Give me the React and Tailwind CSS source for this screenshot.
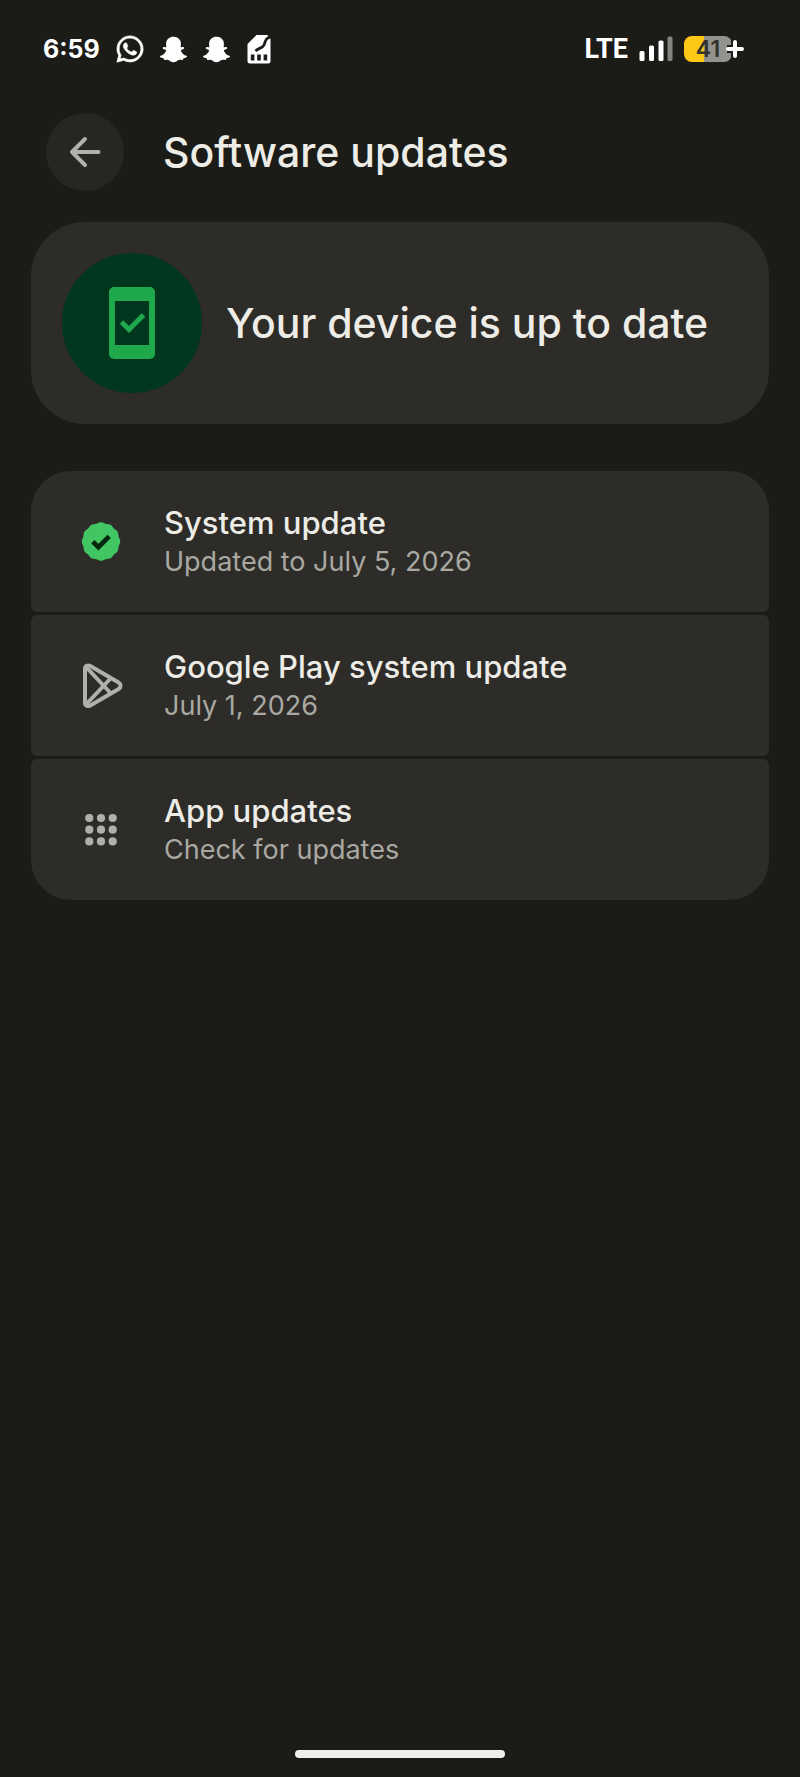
import React from 'react'
import { FaWhatsapp, FaSnapchatGhost } from 'react-icons/fa'

// twelve soft lobes around the badge
const badgePath =
  Array.from({ length: 144 }, (_, i) => {
    const a = (i / 144) * Math.PI * 2
    const r = 18.8 + 0.45 * Math.cos(12 * a)
    const x = 20 + r * Math.sin(a)
    const y = 19.5 - r * Math.cos(a)
    return `${i === 0 ? 'M' : 'L'}${x.toFixed(2)} ${y.toFixed(2)}`
  }).join('') + 'Z'

const VerifiedIcon = () => (
  <svg viewBox="0 0 40 40" className="w-10 h-10" aria-hidden="true">
    <path d={badgePath} fill="#42c563" />
    <path d="M11.8 19.6l5.6 5.6L28.2 14.4" fill="none" stroke="#06280f" strokeWidth="4.8" />
  </svg>
)

const PlayIcon = () => (
  <svg viewBox="0 0 40 44" className="w-10 h-11 overflow-visible" fill="none" stroke="#b1afa9" strokeWidth="4" strokeLinejoin="round" aria-hidden="true">
    <path d="M4 4.8v33.9c0 3 2.8 4.1 5.3 2.7L37.6 25c2.6-1.5 2.6-5 0-6.5L9.3 2.1C6.8.7 4 1.8 4 4.8z" />
    <path d="M5.5 3.5L30 29.5M5.5 40L30 14" />
  </svg>
)

const AppsIcon = () => (
  <svg viewBox="0 0 40 40" className="w-10 h-10" fill="#b1afa9" aria-hidden="true">
    {[8, 19.7, 31.4].map((y) =>
      [8.3, 20, 31.7].map((x) => <circle key={`${x}-${y}`} cx={x} cy={y} r="4.1" />)
    )}
  </svg>
)

const PhoneCheckIcon = () => (
  <svg viewBox="0 0 46 72" className="w-[46px] h-[72px]" aria-hidden="true">
    <path
      fillRule="evenodd"
      fill="#1fa84c"
      d="M5 0h36a5 5 0 0 1 5 5v62a5 5 0 0 1-5 5H5a5 5 0 0 1-5-5V5a5 5 0 0 1 5-5zM6 14v44h34V14z"
    />
    <path d="M12.5 35l7.5 7.5L34.5 28" fill="none" stroke="#1fa84c" strokeWidth="5" />
  </svg>
)

const SimIcon = () => (
  <svg viewBox="0 0 26 30" className="w-[26px] h-[30px]" aria-hidden="true">
    <path d="M10.5 1H22.5a2 2 0 0 1 2 2V27a2.5 2.5 0 0 1-2.5 2.5H4A2.5 2.5 0 0 1 1.5 27V10z" fill="#fff" />
    <path d="M26 3C19.5 3 19.5 7.5 18 11s-5 2.5-8.5 6" fill="none" stroke="#1b1c17" strokeWidth="2.8" />
    <path d="M20 0h6v5z" fill="#1b1c17" />
    <path d="M4.8 20.5h3.6v6H4.8zM11.2 20.5h3.6v6h-3.6zM17.6 20.5h3.6v6h-3.6z" fill="#1b1c17" />
  </svg>
)

const SignalIcon = () => (
  <svg viewBox="0 0 34 26" className="w-[34px] h-[26px]" fill="#fff" aria-hidden="true">
    <rect x="0.5" y="15" width="5" height="10" rx="1.5" />
    <rect x="10" y="9.5" width="5" height="15.5" rx="1.5" />
    <rect x="19.5" y="4.5" width="5" height="20.5" rx="1.5" />
    <rect x="28.5" y="0.5" width="5" height="24.5" rx="1.5" fill="#84847f" />
  </svg>
)

const Battery = () => (
  <div className="flex items-center">
    <div className="flex items-center justify-center w-12 h-[26px] rounded-lg bg-linear-to-r from-[#fdc715] from-42% to-[#92928f] to-42%">
      <span className="text-[23px] leading-none font-semibold text-[#33322c]">41</span>
    </div>
    <svg viewBox="0 0 20 20" className="w-5 h-5 -ml-2" aria-hidden="true">
      <path d="M11 1.5v17M3 10H20" stroke="#1b1c17" strokeWidth="8" />
      <path d="M11 3v14M4 10h14" stroke="#fff" strokeWidth="4" strokeLinecap="round" />
    </svg>
  </div>
)

const StatusBar = () => (
  <div className="flex items-center justify-between h-[98px] pl-[43px] pr-14 text-white">
    <div className="flex items-center gap-4">
      <span className="text-[25px] leading-none font-bold">6:59</span>
      <FaWhatsapp className="w-7 h-[30px] stroke-white stroke-[12px]" />
      <FaSnapchatGhost className="w-[27px] h-[27px]" />
      <FaSnapchatGhost className="w-[27px] h-[27px]" />
      <SimIcon />
    </div>
    <div className="flex items-center gap-[11px]">
      <span className="font-['Roboto',sans-serif] text-[27px] leading-none font-bold">LTE</span>
      <SignalIcon />
      <Battery />
    </div>
  </div>
)

const updates = [
  { title: 'System update', detail: 'Updated to July 5, 2026', Icon: VerifiedIcon },
  { title: 'Google Play system update', detail: 'July 1, 2026', Icon: PlayIcon },
  { title: 'App updates', detail: 'Check for updates', Icon: AppsIcon },
]

const UpdateRow = ({ title, detail, Icon }) => (
  <li className="rounded-md overflow-hidden bg-[#2d2c28] first:rounded-t-[40px] last:rounded-b-[40px]">
    <button type="button" className="flex items-center gap-[43px] w-full h-[141px] pt-px pl-[50px] pr-8 text-left">
      <Icon />
      <span className="flex flex-col">
        <span className="text-[31px] leading-[39px] font-medium text-[#eeece6]">{title}</span>
        <span className="text-[27px] leading-[39px] text-[#a9a8a2]">{detail}</span>
      </span>
    </button>
  </li>
)

export default function App() {
  return (
    <div className="flex flex-col min-h-screen bg-[#1b1c17] font-['Inter',sans-serif]">
      <StatusBar />

      <header className="flex items-center gap-[39px] px-[46px] pt-[15px]">
        <button
          type="button"
          aria-label="Back"
          className="flex items-center justify-center w-[78px] h-[78px] rounded-full bg-[#262722]"
        >
          <svg viewBox="0 0 32 32" className="w-8 h-8" fill="none" stroke="#b1b0aa" strokeWidth="4" strokeLinecap="round" strokeLinejoin="round" aria-hidden="true">
            <path d="M29.5 16H3.5M16 3L3 16l13 13" />
          </svg>
        </button>
        <h1 className="text-[41px] leading-[48px] font-medium text-[#eeece6]">Software updates</h1>
      </header>

      <main className="flex-1 px-[31px] pt-[31px]">
        <section className="flex items-center gap-6 p-[31px] rounded-[54px] bg-[#2d2c28]">
          <div className="flex items-center justify-center shrink-0 w-[140px] h-[140px] rounded-full bg-[#01361f]">
            <PhoneCheckIcon />
          </div>
          <h2 className="text-[41px] leading-[48px] font-medium text-[#eeece6]">Your device is up to date</h2>
        </section>

        <ul className="flex flex-col gap-[3px] mt-[47px]">
          {updates.map((item) => (
            <UpdateRow key={item.title} {...item} />
          ))}
        </ul>
      </main>

      <div className="self-center w-[210px] h-2 mb-[19px] rounded-full bg-[#efefed]" />
    </div>
  )
}
